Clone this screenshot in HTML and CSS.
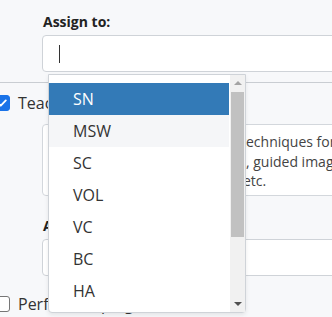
FILE: index.html
```html
<!DOCTYPE html>
<html lang="en">
<head>
    <meta charset="UTF-8">
    <title>Assign to</title>
    <link rel="stylesheet" href="styles.css">
</head>
<body>
    <div class="page">
        <div class="section top">
            <label class="label">Assign to:</label>
            <div class="input"><span class="caret"></span></div>
        </div>

        <div class="section">
            <div class="check-row">
                <span class="checkbox checked">
                    <svg width="12" height="12" viewBox="0 0 12 12"><path d="M2.2 6.2 L4.8 8.7 L9.8 3.4" fill="none" stroke="#fff" stroke-width="1.8" stroke-linecap="round" stroke-linejoin="round"/></svg>
                </span>
                <span class="check-text">Teach coping skills</span>
            </div>
            <div class="textarea">
                <p><span class="under w1">Educate on relaxation </span>techniques for</p>
                <p><span class="under w2">e.g. deep breathing</span>, guided imagery</p>
                <p><span class="under w3">muscle relaxation, music, </span>etc.</p>
            </div>
            <label class="label second">Assign to:</label>
            <div class="input"></div>
        </div>

        <div class="check-row last">
            <span class="checkbox"></span>
            <span class="check-text">Perform coping assessment</span>
        </div>

        <!-- dropdown for the first "Assign to" field -->
        <div class="dropdown">
            <ul class="options">
                <li class="selected">SN</li>
                <li class="hover">MSW</li>
                <li>SC</li>
                <li>VOL</li>
                <li>VC</li>
                <li>BC</li>
                <li>HA</li>
            </ul>
            <div class="scrollbar">
                <span class="arrow up"></span>
                <div class="track"><div class="thumb"></div></div>
                <span class="arrow down"></span>
            </div>
        </div>
    </div>
</body>
</html>
```

FILE: styles.css
```css
body {
    margin: 0;
    background: #f7f8fa;
    font-family: "Open Sans", "Liberation Sans", sans-serif;
    color: #333;
    overflow: hidden;
}
.page {
    position: relative;
    width: 332px;
    height: 317px;
    overflow: hidden;
}
.section {
    padding: 0 0 0 42px;
}
.section.top {
    padding-top: 12px;
    padding-bottom: 10px;
    border-bottom: 1px solid #c9cdd2;
}
.label {
    display: block;
    font-size: 14px;
    font-weight: 700;
    line-height: 20px;
    color: #222;
    margin-bottom: 3px;
    padding-left: 1px;
}
.label.second {
    margin-top: 20px;
}
.input {
    width: 320px;
    height: 35px;
    background: #fff;
    border: 1px solid #cfd3d8;
    border-radius: 4px;
    display: flex;
    align-items: center;
}
.caret {
    width: 1px;
    height: 18px;
    margin-left: 16px;
    background: #333;
}
.check-row {
    display: flex;
    align-items: center;
    gap: 8px;
    height: 24px;
    margin-top: 8px;
    font-size: 16px;
}
.section .check-row {
    margin-left: -42px;
}
.checkbox {
    width: 14px;
    height: 14px;
    border: 1px solid #767676;
    border-radius: 3px;
    background: #fff;
    display: flex;
    align-items: center;
    justify-content: center;
    margin-left: -6px;
}
.checkbox.checked {
    background: #1a73e8;
    border-color: #1a73e8;
}
.check-text {
    color: #333;
}
.textarea {
    margin-top: 9px;
    width: 330px;
    height: 72px;
    background: #fff;
    border: 1px solid #d3d7dc;
    border-radius: 4px;
    padding: 7px 0 0 11px;
    box-sizing: border-box;
    font-size: 14px;
    color: #444;
}
.textarea p {
    margin: 0;
    line-height: 19.7px;
    white-space: nowrap;
}
/* start of each line sits under the open dropdown */
.under {
    display: inline-block;
    overflow: hidden;
    vertical-align: top;
}
.w1 { width: 187px; }
.w2 { width: 192px; }
.w3 { width: 189px; }
.check-row.last {
    margin-top: 16px;
}
.dropdown {
    position: absolute;
    left: 48px;
    top: 74px;
    width: 196px;
    height: 237px;
    background: #fff;
    border: 1px solid #cfd3d8;
    border-radius: 0 0 4px 4px;
    box-shadow: 0 2px 4px rgba(0, 0, 0, 0.08);
    display: flex;
}
.options {
    list-style: none;
    margin: 0;
    padding: 8px 0 0;
    flex: 1;
}
.options li {
    height: 32px;
    line-height: 32px;
    padding-left: 24px;
    font-size: 16px;
    color: #333;
}
.options li.selected {
    background: #337ab7;
    color: #fff;
}
.options li.hover {
    background: #f5f6f8;
}
.scrollbar {
    width: 15px;
    margin-left: 1px;
    background: #f1f1f1;
    display: flex;
    flex-direction: column;
    align-items: center;
}
.arrow {
    width: 0;
    height: 0;
    border-left: 4px solid transparent;
    border-right: 4px solid transparent;
}
.arrow.up {
    margin: 6px 0 4px;
    border-bottom: 4px solid #a3a3a3;
}
.arrow.down {
    margin: 4px 0 6px;
    border-top: 4px solid #505050;
}
.track {
    flex: 1;
    width: 100%;
    padding: 3px 1px 0;
    box-sizing: border-box;
}
.thumb {
    height: 145px;
    background: #c1c1c1;
}
```
